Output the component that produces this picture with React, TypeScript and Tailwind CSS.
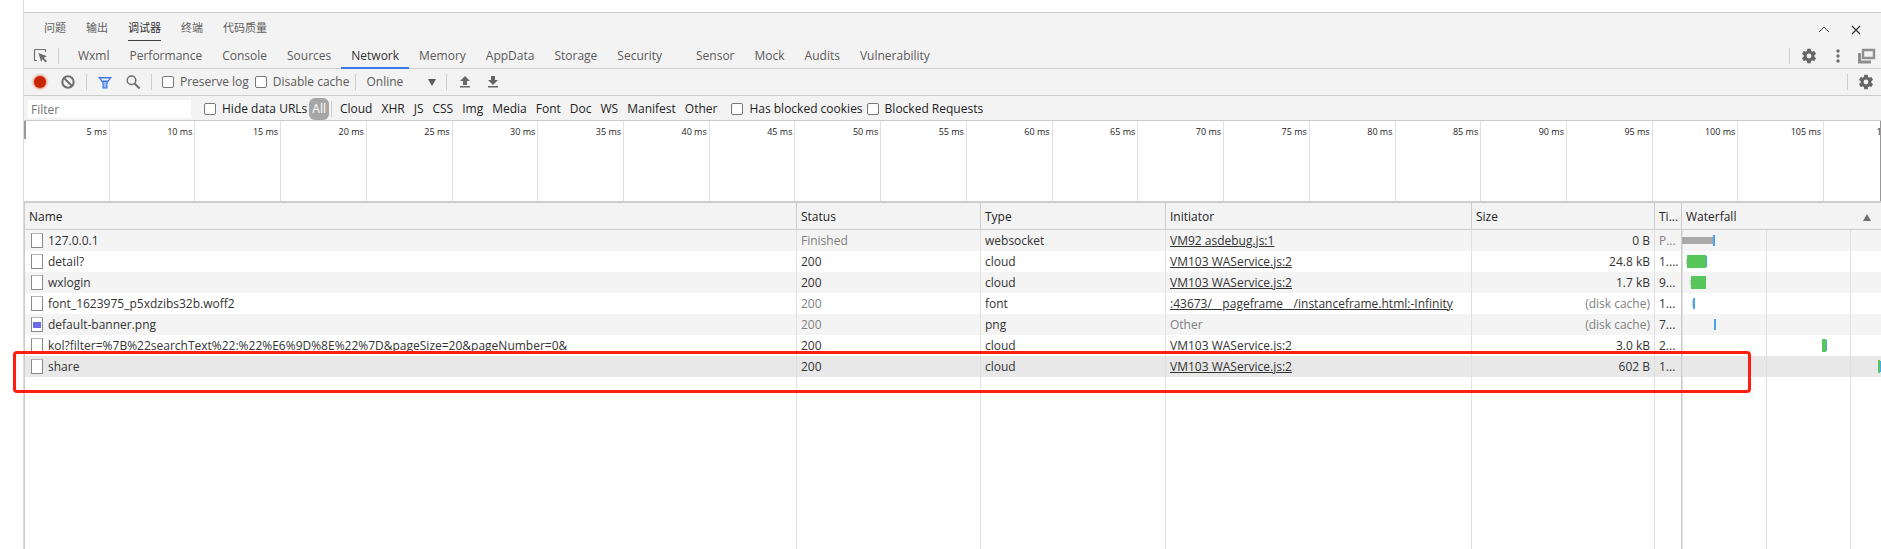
import React from 'react';

const panelTabs = ['问题', '输出', '调试器', '终端', '代码质量'];

const toolTabs = [
  'Wxml',
  'Performance',
  'Console',
  'Sources',
  'Network',
  'Memory',
  'AppData',
  'Storage',
  'Security',
  'Sensor',
  'Mock',
  'Audits',
  'Vulnerability',
];

const resourceTypes = ['Cloud', 'XHR', 'JS', 'CSS', 'Img', 'Media', 'Font', 'Doc', 'WS', 'Manifest', 'Other'];

const ticks = Array.from({ length: 22 }, (_, i) => `${(i + 1) * 5} ms`);

type Bar = { x: number; w: number; h: number; fill: string };

type Request = {
  name: string;
  status: string;
  type: string;
  initiator: string;
  size: string;
  time: string;
  image?: boolean;
  cached?: boolean;
  pending?: boolean;
  selected?: boolean;
  bars: Bar[];
};

const GREEN = '#57c65b';
const BLUE = '#4ba5ee';
const GREY = '#a9a9a9';
const LIGHT = '#cfcfcf';

const requests: Request[] = [
  {
    name: '127.0.0.1',
    status: 'Finished',
    type: 'websocket',
    initiator: 'VM92 asdebug.js:1',
    size: '0 B',
    time: 'P...',
    pending: true,
    bars: [
      { x: 0, w: 31, h: 7, fill: GREY },
      { x: 31, w: 2, h: 11, fill: BLUE },
    ],
  },
  {
    name: 'detail?',
    status: '200',
    type: 'cloud',
    initiator: 'VM103 WAService.js:2',
    size: '24.8 kB',
    time: '1....',
    bars: [
      { x: 4, w: 1, h: 5, fill: LIGHT },
      { x: 5, w: 19, h: 13, fill: GREEN },
      { x: 24, w: 1, h: 11, fill: BLUE },
    ],
  },
  {
    name: 'wxlogin',
    status: '200',
    type: 'cloud',
    initiator: 'VM103 WAService.js:2',
    size: '1.7 kB',
    time: '9...',
    bars: [
      { x: 8, w: 1, h: 5, fill: LIGHT },
      { x: 9, w: 15, h: 13, fill: GREEN },
    ],
  },
  {
    name: 'font_1623975_p5xdzibs32b.woff2',
    status: '200',
    type: 'font',
    initiator: ':43673/__pageframe__/instanceframe.html:-Infinity',
    size: '(disk cache)',
    time: '1...',
    cached: true,
    bars: [
      { x: 10, w: 1, h: 7, fill: LIGHT },
      { x: 11, w: 2, h: 11, fill: BLUE },
    ],
  },
  {
    name: 'default-banner.png',
    status: '200',
    type: 'png',
    initiator: 'Other',
    size: '(disk cache)',
    time: '7...',
    image: true,
    cached: true,
    bars: [{ x: 32, w: 2, h: 11, fill: BLUE }],
  },
  {
    name: 'kol?filter=%7B%22searchText%22:%22%E6%9D%8E%22%7D&pageSize=20&pageNumber=0&',
    status: '200',
    type: 'cloud',
    initiator: 'VM103 WAService.js:2',
    size: '3.0 kB',
    time: '2...',
    bars: [
      { x: 140, w: 4, h: 13, fill: GREEN },
      { x: 144, w: 1, h: 11, fill: BLUE },
    ],
  },
  {
    name: 'share',
    status: '200',
    type: 'cloud',
    initiator: 'VM103 WAService.js:2',
    size: '602 B',
    time: '1...',
    selected: true,
    bars: [
      { x: 196, w: 2, h: 13, fill: GREEN },
      { x: 198, w: 2, h: 11, fill: BLUE },
    ],
  },
];

function Divider() {
  return <span className="h-4 w-px shrink-0 bg-[#ccc]" />;
}

function Gear() {
  return (
    <svg className="size-[18px]" viewBox="0 0 24 24" fill="#666">
      <path d="M19.14 12.94c.04-.3.06-.61.06-.94 0-.32-.02-.64-.07-.94l2.03-1.58a.49.49 0 0 0 .12-.61l-1.92-3.32a.49.49 0 0 0-.59-.22l-2.39.96a7 7 0 0 0-1.62-.94l-.36-2.54a.48.48 0 0 0-.48-.41h-3.84a.48.48 0 0 0-.47.41l-.36 2.54c-.59.24-1.13.57-1.62.94l-2.39-.96a.48.48 0 0 0-.59.22L2.74 8.87a.48.48 0 0 0 .12.61l2.03 1.58c-.05.3-.09.63-.09.94s.02.64.07.94l-2.03 1.58a.49.49 0 0 0-.12.61l1.92 3.32c.12.22.37.29.59.22l2.39-.96c.5.38 1.03.7 1.62.94l.36 2.54c.05.24.24.41.48.41h3.84c.24 0 .44-.17.47-.41l.36-2.54c.59-.24 1.13-.56 1.62-.94l2.39.96c.22.08.47 0 .59-.22l1.92-3.32a.48.48 0 0 0-.12-.61zM12 15.2A3.200 3.200 0 1 1 12 8.800a3.200 3.200 0 0 1 0 6.400z" />
    </svg>
  );
}

function Check({ label }: { label: string }) {
  return (
    <label className="flex items-center gap-1.5 whitespace-nowrap">
      <input type="checkbox" className="size-3 appearance-none rounded-xs border border-[#767676] bg-white" />
      {label}
    </label>
  );
}

function PanelTabs() {
  return (
    <div className="flex h-[30px] items-center justify-between pl-5 pr-[19px]">
      <div className="flex gap-5 text-[11px] leading-4 text-[#616161]">
        {panelTabs.map((tab) => (
          <button
            key={tab}
            className={
              tab === '调试器' ? 'border-b border-[#424242] pb-1 pt-[5px] text-[#333]' : 'border-b border-transparent pb-1 pt-[5px]'
            }
          >
            {tab}
          </button>
        ))}
      </div>
      <div className="flex items-center gap-5 pt-1">
        <button aria-label="Collapse">
          <svg className="size-3" viewBox="0 0 12 12" fill="none" stroke="#424242">
            <path d="M1 8l5-5 5 5" />
          </svg>
        </button>
        <button aria-label="Close">
          <svg className="size-3" viewBox="0 0 12 12" fill="none" stroke="#333" strokeWidth="1.2">
            <path d="M2 2l8 8M10 2l-8 8" />
          </svg>
        </button>
      </div>
    </div>
  );
}

function ToolTabs() {
  return (
    <div className="flex h-[26px] items-center border-b border-[#ccc] pl-[9px] pr-1 text-[#5a5a5a]">
      <button aria-label="Select element" className="mr-2.5">
        <svg className="size-[15px]" viewBox="0 0 15 15" fill="none">
          <path d="M4 12.5H2.2A.7.7 0 0 1 1.5 11.800V2.200A.7.7 0 0 1 2.200 1.500H11.800A.7.7 0 0 1 12.500 2.200V4" stroke="#6e6e6e" strokeWidth="1.200" />
          <path d="M5.500 5l8.500 3.300-3.200 1.600 3.200 3.200-1.300 1.300-3.200-3.200-1.400 2.900z" fill="#6e6e6e" />
        </svg>
      </button>
      <Divider />
      <nav className="ml-[9px] flex self-stretch">
        {toolTabs.map((tab) => (
          <button
            key={tab}
            className={
              tab === 'Network'
                ? '-mb-px border-b-2 border-[#3b78e7] px-2.5 pt-px text-[#333]'
                : tab === 'Security'
                  ? 'mr-3.5 px-2.5'
                  : 'px-2.5'
            }
          >
            {tab}
          </button>
        ))}
      </nav>
      <div className="ml-auto flex items-center">
        <Divider />
        <button aria-label="Settings" className="ml-2.5">
          <Gear />
        </button>
        <button aria-label="More" className="ml-[15px]">
          <svg className="h-4 w-2.5" viewBox="0 0 10 16" fill="#6e6e6e">
            <circle cx="5" cy="3" r="1.700" />
            <circle cx="5" cy="8" r="1.700" />
            <circle cx="5" cy="13" r="1.700" />
          </svg>
        </button>
        <button aria-label="Dock side" className="ml-3.5">
          <svg className="h-4 w-5" viewBox="0 0 20 16" fill="none" stroke="#8e8e8e" strokeWidth="2">
            <path d="M6 2h11v8H6z" strokeWidth="2.400" />
            <path d="M2.500 5v9H14" strokeWidth="3" />
          </svg>
        </button>
      </div>
    </div>
  );
}

function Toolbar() {
  return (
    <div className="flex h-[27px] items-center border-b border-[#ccc] pl-[7px] pr-1.5 text-[#5a5a5a]">
      <button aria-label="Record network log">
        <svg className="size-[18px]" viewBox="0 0 18 18">
          <circle cx="9" cy="9" r="8.500" fill="#f3c9c2" opacity=".6" />
          <circle cx="9" cy="9" r="7.200" fill="#e58a7a" opacity=".6" />
          <circle cx="9" cy="9" r="6" fill="#c82400" />
        </svg>
      </button>
      <button aria-label="Clear" className="ml-[11px]">
        <svg className="size-4" viewBox="0 0 16 16" fill="none" stroke="#6e6e6e" strokeWidth="2">
          <circle cx="8" cy="8" r="5.700" />
          <path d="M4 4l8 8" />
        </svg>
      </button>
      <span className="mx-2.5 flex">
        <Divider />
      </span>
      <button aria-label="Filter">
        <svg className="size-4" viewBox="0 0 16 16">
          <path d="M1 3h14l-4.500 6v5.500h-5V9z" fill="#3b78e7" />
          <path d="M3.600 4.500h8.800L10.800 6.500H5.200z" fill="#f3f3f3" />
          <path d="M6 8h4l-.700 1.200v4H6.700v-4z" fill="#9dbdf5" />
        </svg>
      </button>
      <button aria-label="Search" className="ml-3">
        <svg className="size-4" viewBox="0 0 16 16" fill="none" stroke="#6e6e6e">
          <circle cx="6.500" cy="6.300" r="4.300" strokeWidth="1.500" />
          <path d="M9.600 9.500l5 5" strokeWidth="2" />
        </svg>
      </button>
      <span className="mx-2.5 flex">
        <Divider />
      </span>
      <div className="flex gap-1.5">
        <Check label="Preserve log" />
        <Check label="Disable cache" />
      </div>
      <span className="ml-1.5 mr-2.5 flex">
        <Divider />
      </span>
      <div className="relative flex items-center">
        <select aria-label="Throttling" className="w-[70px] appearance-none bg-transparent">
          <option>Online</option>
        </select>
        <svg className="pointer-events-none absolute right-0 h-[7px] w-2" viewBox="0 0 8 7" fill="#5a5a5a">
          <path d="M0 0h8L4 7z" />
        </svg>
      </div>
      <span className="mx-2.5 flex">
        <Divider />
      </span>
      <button aria-label="Import HAR file">
        <svg className="size-4" viewBox="0 0 16 16" fill="#666">
          <path d="M8 2l5 5h-3v4H6V7H3zM3 12h10v1.500H3z" />
        </svg>
      </button>
      <button aria-label="Export HAR file" className="ml-3">
        <svg className="size-4" viewBox="0 0 16 16" fill="#666">
          <path d="M6 2h4v4h3l-5 5-5-5h3zM3 12h10v1.500H3z" />
        </svg>
      </button>
      <div className="ml-auto flex items-center gap-[9px]">
        <Divider />
        <button aria-label="Network settings">
          <Gear />
        </button>
      </div>
    </div>
  );
}

function FilterBar() {
  return (
    <div className="flex h-[25px] items-center border-b border-[#ccc] pl-1 pt-px text-[#222]">
      <input
        aria-label="Filter"
        placeholder="Filter"
        className="h-[18px] w-[163px] bg-white px-[3px] pt-0.5 outline-none placeholder:text-[#757575]"
      />
      <div className="ml-[13px]">
        <Check label="Hide data URLs" />
      </div>
      <button className="mx-0.5 h-[22px] rounded-md bg-[#a6a6a6] px-[3px] text-white">All</button>
      <Divider />
      <div className="ml-2 flex gap-[9px] pt-px">
        {resourceTypes.map((type) => (
          <button key={type}>{type}</button>
        ))}
      </div>
      <div className="ml-3.5 flex gap-1">
        <Check label="Has blocked cookies" />
        <Check label="Blocked Requests" />
      </div>
    </div>
  );
}

function Overview() {
  return (
    <div className="flex h-20 overflow-hidden border-r border-[#999] bg-white text-[9px] leading-4 text-[#222]">
      {ticks.map((tick, i) => (
        <div key={tick} className="flex shrink-0 basis-[4.619%] border-r border-[#e0e0e0]">
          {i === 0 && <span className="h-[18px] w-0.5 bg-[#999]" />}
          <span className="ml-auto pr-0.5 pt-[3px]">{tick}</span>
        </div>
      ))}
    </div>
  );
}

function Waterfall({ bars = [] }: { bars?: Bar[] }) {
  return (
    <svg className="absolute inset-0 h-full w-full">
      <path d="M.5 0v600" stroke="#e0e0e0" />
      <path d="M84.500 0v600M168.500 0v600" stroke="#e0e0e0" />
      {bars.map((bar) => (
        <rect key={bar.x} x={bar.x} y={(21 - bar.h) / 2} width={bar.w} height={bar.h} fill={bar.fill} shapeRendering="crispEdges" />
      ))}
    </svg>
  );
}

function FileIcon({ image }: { image?: boolean }) {
  return (
    <span className="flex h-[15px] w-3 shrink-0 items-center justify-center border border-[#8a8a8a] border-t-[#b5b5b5] bg-white">
      {image && <span className="h-1.5 w-2 bg-[#6b6bea]" />}
    </span>
  );
}

function RequestTable() {
  const head = 'border-b border-r border-[#ccc] px-1 pt-0.5 text-left font-normal';
  const cell = 'truncate border-r border-[#e0e0e0] px-1';

  return (
    <table className="h-full w-full table-fixed border-separate border-spacing-0 text-[#333]">
      <colgroup>
        <col />
        <col className="w-[184px]" />
        <col className="w-[185px]" />
        <col className="w-[306px]" />
        <col className="w-[183px]" />
        <col className="w-[27px]" />
        <col className="w-[199px]" />
      </colgroup>
      <thead>
        <tr className="h-[27px] bg-[#f3f3f3] text-[#222]">
          <th className={head}>Name</th>
          <th className={head}>Status</th>
          <th className={head}>Type</th>
          <th className={head}>Initiator</th>
          <th className={head}>Size</th>
          <th className="whitespace-nowrap border-b border-r border-[#ccc] pl-1 pt-0.5 text-left font-normal">Ti...</th>
          <th className="border-b border-[#ccc] px-1 pt-0.5 text-left font-normal">
            <div className="flex items-center justify-between pr-1.5">
              Waterfall
              <svg className="h-[7px] w-2" viewBox="0 0 8 7" fill="#6e6e6e">
                <path d="M4 0l4 7H0z" />
              </svg>
            </div>
          </th>
        </tr>
      </thead>
      <tbody>
        {requests.map((req) => {
          const muted = req.cached || req.pending ? 'text-[#808080]' : '';
          return (
            <tr key={req.name} className={req.selected ? 'h-[21px] bg-[#e8e8e8]' : 'h-[21px] odd:bg-[#f4f4f4]'}>
              <td className={cell}>
                <div className="flex items-center gap-[5px] pl-0.5">
                  <FileIcon image={req.image} />
                  <span>{req.name}</span>
                </div>
              </td>
              <td className={`${cell} ${muted}`}>{req.status}</td>
              <td className={cell}>{req.type}</td>
              <td className={cell}>
                {req.initiator === 'Other' ? (
                  <span className="text-[#808080]">Other</span>
                ) : (
                  <a href="#" className="underline">
                    {req.initiator}
                  </a>
                )}
              </td>
              <td className={`${cell} text-right ${req.cached ? 'text-[#808080]' : ''}`}>{req.size}</td>
              <td className={`whitespace-nowrap border-r border-[#ccc] pl-1 ${req.pending ? 'text-[#808080]' : ''}`}>{req.time}</td>
              <td className="relative">
                <Waterfall bars={req.bars} />
              </td>
            </tr>
          );
        })}
        {/* empty space under the last request */}
        <tr>
          <td className={cell} />
          <td className={cell} />
          <td className={cell} />
          <td className={cell} />
          <td className={cell} />
          <td className="border-r border-[#ccc]" />
          <td className="relative">
            <Waterfall />
          </td>
        </tr>
      </tbody>
    </table>
  );
}

export default function App() {
  return (
    <div className="relative flex h-screen overflow-hidden bg-white pl-[23px] font-['Open_Sans','Noto_Sans_CJK_SC',sans-serif] text-xs leading-4">
      <div className="flex min-w-0 flex-1 flex-col border-l border-[#ddd] pt-3">
        <div className="border-t border-[#ccc] bg-[#f3f3f3]">
          <PanelTabs />
          <ToolTabs />
          <Toolbar />
          <FilterBar />
        </div>
        <Overview />
        <div className="min-h-0 flex-1 border-l border-t-2 border-[#ccc]">
          <RequestTable />
        </div>
      </div>
      {/* highlight around the share request */}
      <div className="pointer-events-none absolute left-[13px] right-[130px] top-[351px] h-[42px] rounded-sm border-[3px] border-[#ff1e10]" />
    </div>
  );
}
